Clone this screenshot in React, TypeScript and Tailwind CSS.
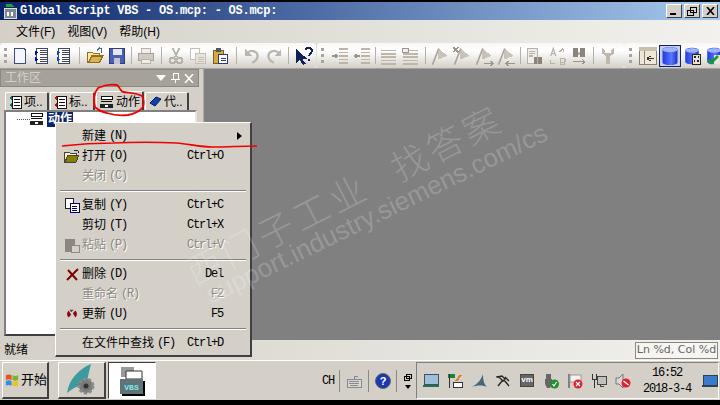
import React from 'react'

const raised = 'border border-t-white border-l-white border-r-[#404040] border-b-[#404040]'
const monoText = "font-['Liberation_Mono',monospace] text-[12px] tracking-[-1.2px]"

const Svg: React.FC<{ children: React.ReactNode; size?: number }> = ({ children, size = 16 }) => (
  <svg width={size} height={size} viewBox="0 0 16 16" fill="none" shapeRendering="crispEdges">
    {children}
  </svg>
)

const PageIcon = () => (
  <Svg size={18}>
    <path d="M3 1h8l2 2v12H3z" fill="#f4f6fc" stroke="#3a4a8a" />
  </Svg>
)
const ListIcon: React.FC<{ color?: string }> = ({ color = '#0000c0' }) => (
  <Svg size={18}>
    <path d="M3 1h10v14H3z" fill="#fff" stroke="#3a4a6a" />
    <path d="M6 3h6M6 5h6M6 7h6M6 9h6M6 11h6M6 13h6" stroke="#445" />
    <path d="M2 3l3 2-3 2zM2 9l3 2-3 2z" fill={color} />
  </Svg>
)
const OpenIcon = () => (
  <Svg size={18}>
    <path d="M1 5h5l1 1h5v2H5l-3 6H1z" fill="#ffe9a0" stroke="#8a7020" />
    <path d="M2 14l3-6h10l-3 6z" fill="#e0b050" stroke="#8a7020" />
    <path d="M10 3l2-2 2 1v3" stroke="#4060a0" />
  </Svg>
)
const SaveIcon = () => (
  <Svg size={18}>
    <path d="M1 1h14v14H1z" fill="#4a60b0" stroke="#303a80" />
    <path d="M4 2h8v5H4z" fill="#e8e8f0" />
    <path d="M5 10h6v5H5z" fill="#c0c4d8" />
  </Svg>
)
const PrintIcon = () => (
  <Svg size={18}>
    <path d="M4 1h8v5H4z" fill="#f0eeea" stroke="#b8b2a8" />
    <path d="M1 6h14v6H1z" fill="#d0ccc4" stroke="#a8a298" />
    <path d="M4 11h8v4H4z" fill="#f0eeea" stroke="#b8b2a8" />
  </Svg>
)
const CutIcon = () => (
  <Svg size={18}>
    <path d="M5 1l4 8M11 1L7 9" stroke="#b8b2a8" strokeWidth="1.5" />
    <circle cx="5" cy="12" r="2.5" stroke="#b8b2a8" strokeWidth="1.5" />
    <circle cx="11" cy="12" r="2.5" stroke="#b8b2a8" strokeWidth="1.5" />
  </Svg>
)
const CopyIcon: React.FC<{ dark?: boolean }> = ({ dark }) => (
  <Svg size={dark ? 16 : 18}>
    <path d="M1 1h8v10H1z" fill="#fff" stroke={dark ? '#222' : '#c4beb4'} />
    <path d="M6 6h9v9H6z" fill={dark ? '#fff' : '#e8e4dc'} stroke={dark ? '#00007a' : '#c4beb4'} />
    <path d="M8 9h5M8 11h5M8 13h5" stroke={dark ? '#00007a' : '#c4beb4'} />
  </Svg>
)
const PasteIcon = () => (
  <Svg size={18}>
    <path d="M2 3h9v12H2z" fill="#d8a840" stroke="#7a6020" />
    <path d="M4 1h5v3H4z" fill="#555" />
    <path d="M7 7h8v8H7z" fill="#fff" stroke="#2a3a7a" />
    <path d="M9 10h4M9 12h4" stroke="#2a3a7a" />
  </Svg>
)
const UndoIcon: React.FC<{ flip?: boolean }> = ({ flip }) => (
  <Svg size={18}>
    <g transform={flip ? 'matrix(-1 0 0 1 16 0)' : undefined}>
      <path d="M4 5c4-3 9-1 9 3s-3 5-5 6" stroke="#bcb6ac" strokeWidth="2" fill="none" shapeRendering="auto" />
      <path d="M2 2v6h6z" fill="#bcb6ac" />
    </g>
  </Svg>
)
const HelpArrowIcon = () => (
  <Svg size={20}>
    <path d="M2 2v12l3-3 3 4 2-1-3-4h4z" fill="#10205a" />
    <path d="M10 3c1-2 5-2 5 1 0 2-2 2-2 4M13 10v2" stroke="#10205a" strokeWidth="1.6" />
  </Svg>
)
const IndentIcon: React.FC<{ left?: boolean }> = ({ left }) => (
  <Svg size={18}>
    <path d="M7 2h8M7 5h8M7 8h8M7 11h8M7 14h8" stroke="#bcb4a8" strokeWidth="1.4" />
    <path d={left ? 'M1 8h5M1 8l2-2M1 8l2 2' : 'M1 8h5M6 8l-2-2M6 8l-2 2'} stroke="#9a958c" strokeWidth="1.3" />
  </Svg>
)
const LinesIcon: React.FC<{ back?: boolean }> = ({ back }) => (
  <Svg size={18}>
    <path d="M2 3h13M2 6h13M2 9h13M2 12h13M2 15h13" stroke="#bfb6a8" strokeWidth="1.5" />
    {back && <path d="M1 1h6v4H1z" fill="#f0eeea" stroke="#9a958c" />}
  </Svg>
)
const FlagIcon: React.FC<{ mark?: 'x' | 'r' | 'l' }> = ({ mark }) => (
  <Svg size={20}>
    <path d="M2 15L7 2" stroke="#a8a298" strokeWidth="1.3" shapeRendering="auto" />
    <path d="M7 2l7 6-8 3z" fill="#c8c2b8" />
    {mark === 'x' && <path d="M1 1l4 4M5 1L1 5" stroke="#9a958c" strokeWidth="1.4" />}
    {mark === 'r' && <path d="M8 14h7M13 12l2 2-2 2" stroke="#9a958c" />}
    {mark === 'l' && <path d="M8 14h7M10 12l-2 2 2 2" stroke="#9a958c" />}
  </Svg>
)
const FindIcon = () => (
  <Svg size={18}>
    <path d="M1 1h9v14H1z" fill="#f0eeea" stroke="#b8b2a8" />
    <path d="M3 4h5M3 6h5M3 8h3" stroke="#b8b2a8" />
    <path d="M7 9h3v6H7zM11 9h3v6h-3z" fill="#8c847c" />
  </Svg>
)
const ReplaceIcon = () => (
  <Svg size={20}>
    <path d="M3 8l2-6 2 6M4 6h2" stroke="#b8b2a8" shapeRendering="auto" />
    <path d="M10 5l3-3M13 2v3" stroke="#b8b2a8" />
    <path d="M3 11v3h3M11 10h2a1 1 0 010 3h-2zM11 13h2a1 1 0 010 2h-2z" stroke="#b8b2a8" />
  </Svg>
)
const BinocularIcon = () => (
  <Svg size={18}>
    <path d="M3 1h4v8H3zM9 1h4v8H9z" fill="#8c847c" />
    <path d="M7 4h2v3H7z" fill="#b8b2a8" />
    <path d="M3 13h10M11 11l2 2-2 2" stroke="#9a958c" />
  </Svg>
)
const WrenchIcon = () => (
  <Svg size={18}>
    <path d="M3 1v5l3 2v7h4V8l3-2V1l-2 2v2H5V3z" fill="#c0b8ac" />
  </Svg>
)
const WindowIcon = () => (
  <Svg size={20}>
    <path d="M1 1h14v14H1z" fill="#efe8d8" stroke="#8a7f68" />
    <path d="M1 1h14v3H1z" fill="#c8c0ac" />
    <path d="M5 4v11" stroke="#8a7f68" />
    <path d="M7 10h6M7 10l3-2M7 10l3 2" stroke="#333" />
  </Svg>
)
const DbIcon: React.FC<{ size?: number }> = ({ size = 22 }) => (
  <svg width={size} height={size} viewBox="0 0 16 16">
    <defs>
      <linearGradient id="db" x1="0" x2="1" y1="0" y2="0">
        <stop offset="0" stopColor="#2038e0" />
        <stop offset="0.6" stopColor="#5a78ff" />
        <stop offset="1" stopColor="#2030c0" />
      </linearGradient>
    </defs>
    <path d="M2 3c0-3 12-3 12 0v10c0 3-12 3-12 0z" fill="url(#db)" />
    <ellipse cx="8" cy="3" rx="6" ry="2" fill="#a0b4ff" />
  </svg>
)
const DbBitsIcon = () => (
  <span className="relative w-[19px] h-[18px]">
    <DbIcon size={18} />
    <svg className="absolute left-0 top-0" width="19" height="18" viewBox="0 0 19 18" fill="none" shapeRendering="crispEdges">
      <path d="M9.5 7.5h8v10h-8z" fill="#e8e4dc" stroke="#222" />
      <path d="M11 9h2v2h-2zM15 9h1v2h-1zM11 13h1v2h-1zM14 13h2v2h-2z" fill="#222" />
    </svg>
  </span>
)
const DbCheckIcon = () => (
  <span className="relative w-[19px] h-[18px]">
    <DbIcon size={18} />
    <svg className="absolute left-0 top-0" width="19" height="18" viewBox="0 0 19 18" fill="none">
      <path d="M9 8h9v9H9z" fill="#e8e4dc" />
      <path d="M3 13l3 3 7-7" stroke="#10a020" strokeWidth="2.5" />
    </svg>
  </span>
)

const Grip = () => (
  <span className="flex flex-col gap-[3px] w-[4px] items-center shrink-0">
    <span className="w-[3px] h-[3px] bg-[#a8a49a]" />
    <span className="w-[3px] h-[3px] bg-[#a8a49a]" />
    <span className="w-[3px] h-[3px] bg-[#a8a49a]" />
  </span>
)
const Sep = () => <span className="w-px h-[17px] bg-[#b4b0a8] mx-auto" />
const Btn: React.FC<{ children: React.ReactNode; w?: string }> = ({ children, w = 'w-[22px]' }) => (
  <span className={`${w} h-[22px] flex items-center justify-center shrink-0`}>{children}</span>
)
const SepSlot: React.FC<{ w: string }> = ({ w }) => (
  <span className={`${w} flex items-center shrink-0`}>
    <Sep />
  </span>
)

const Toolbar = () => (
  <div className="h-[25px] flex bg-[linear-gradient(to_right,#d4d0c8,#f2f1ed)] shrink-0">
    <div className="w-[316px] flex items-center pl-[3px] rounded-[3px] bg-[linear-gradient(to_bottom,#f8f7f5,#ffffff_30%,#d4d0c8)] shrink-0">
      <span className="w-[6px] flex"><Grip /></span>
      <Btn><PageIcon /></Btn>
      <Btn><ListIcon /></Btn>
      <Btn><ListIcon color="#2040c0" /></Btn>
      <SepSlot w="w-[9px]" />
      <Btn><OpenIcon /></Btn>
      <Btn><SaveIcon /></Btn>
      <SepSlot w="w-[7px]" />
      <Btn><PrintIcon /></Btn>
      <SepSlot w="w-[8px]" />
      <Btn><CutIcon /></Btn>
      <Btn><CopyIcon /></Btn>
      <Btn><PasteIcon /></Btn>
      <SepSlot w="w-[10px]" />
      <Btn><UndoIcon /></Btn>
      <Btn><UndoIcon flip /></Btn>
      <SepSlot w="w-[7px]" />
      <Btn><HelpArrowIcon /></Btn>
    </div>
    <div className="w-[307px] ml-px flex items-center pl-[3px] rounded-[3px] bg-[linear-gradient(to_bottom,#f8f7f5,#ffffff_30%,#d4d0c8)] shrink-0">
      <span className="w-[9px] flex"><Grip /></span>
      <Btn><IndentIcon /></Btn>
      <Btn><IndentIcon left /></Btn>
      <SepSlot w="w-[4px]" />
      <Btn><LinesIcon /></Btn>
      <Btn><LinesIcon back /></Btn>
      <SepSlot w="w-[8px]" />
      <Btn><FlagIcon /></Btn>
      <Btn><FlagIcon mark="x" /></Btn>
      <Btn><FlagIcon mark="r" /></Btn>
      <Btn><FlagIcon mark="l" /></Btn>
      <SepSlot w="w-[7px]" />
      <Btn><FindIcon /></Btn>
      <Btn><ReplaceIcon /></Btn>
      <Btn><BinocularIcon /></Btn>
      <SepSlot w="w-[7px]" />
      <Btn><WrenchIcon /></Btn>
    </div>
    <div className="flex-1 flex items-center pl-[4px] rounded-l-[3px] bg-[linear-gradient(to_bottom,#f8f7f5,#ffffff_30%,#d4d0c8)]">
      <span className="w-[9px] flex"><Grip /></span>
      <Btn><WindowIcon /></Btn>
      <span className="w-[22px] h-[22px] flex items-center justify-center bg-[#c6cfe6] border border-[#0a246a] shrink-0"><DbIcon /></span>
      <Btn><DbBitsIcon /></Btn>
      <Btn><DbCheckIcon /></Btn>
    </div>
  </div>
)

const ActionIcon = () => (
  <svg width="14" height="14" viewBox="0 0 14 14" fill="none" shapeRendering="crispEdges">
    <path d="M1 1h11v3H1zM1 6h11M1 9h11" stroke="#111" fill="#fff" />
    <path d="M0 9h13v4H0z" fill="#222" />
    <path d="M5 10l3 2M8 10l-3 2" stroke="#fff" />
  </svg>
)
const TabIcon: React.FC<{ color: string }> = ({ color }) => (
  <svg width="13" height="14" viewBox="0 0 13 14" fill="none" shapeRendering="crispEdges">
    <path d="M3 1h9v12H3z" fill="#fff" stroke="#111" />
    <path d="M5 4h6M5 7h6M5 10h6" stroke="#111" />
    <path d="M0 3l3-2v4zM0 10l3-2v4z" fill={color} />
  </svg>
)
const CodeIcon = () => (
  <svg width="13" height="12" viewBox="0 0 13 12" fill="none">
    <path d="M1 7l6-6 5 2-6 7z" fill="#1040b0" stroke="#0a1a50" />
  </svg>
)

const Tab: React.FC<{ icon: React.ReactNode; label: string; w: string; active?: boolean }> = ({ icon, label, w, active }) => (
  <div className={`${w} ${active ? 'h-[20px] -mb-px' : 'h-[18px]'} flex items-center gap-[2px] pl-[3px] text-[12px] leading-none text-black bg-[#d4d0c8] border-t border-l border-t-white border-l-white border-r-2 border-r-[#404040] rounded-t-[2px] overflow-hidden whitespace-nowrap`}>
    {icon}
    <span>{label}</span>
  </div>
)

const Panel = () => (
  <div className="w-[204px] shrink-0 flex flex-col bg-[#d4d0c8] border-r border-r-[#b0aca4]">
    <div className="h-[18px] mr-[4px] flex items-center justify-between pl-[4px] pr-[4px] bg-[#a6a29a] border border-[#8c8880] text-[#d4d0c8] text-[12px] shrink-0">
      <span>工作区</span>
      <span className="flex items-center gap-[4px]">
        <svg width="10" height="6" viewBox="0 0 10 6"><path d="M0 0h10L5 6z" fill="#fff" /></svg>
        <svg width="10" height="10" viewBox="0 0 10 10" fill="none" shapeRendering="crispEdges"><path d="M3 0h5v6H3zM1 6h9M5 6v4" stroke="#fff" /></svg>
        <svg width="10" height="9" viewBox="0 0 10 9" fill="none"><path d="M1 0l8 9M9 0L1 9" stroke="#fff" strokeWidth="1.5" /></svg>
      </span>
    </div>
    <div className="h-[23px] flex items-end gap-px pl-[5px] shrink-0">
      <Tab icon={<TabIcon color="#007a60" />} label="项.." w="w-[44px]" />
      <Tab icon={<TabIcon color="#d00000" />} label="标.." w="w-[45px]" />
      <Tab icon={<ActionIcon />} label="动作" w="w-[48px]" active />
      <Tab icon={<CodeIcon />} label="代.." w="w-[44px]" />
    </div>
    <div className="flex-1 ml-[4px] mr-[6px] mb-[4px] bg-white border-2 border-t-[#808080] border-l-[#808080] border-r-[#e8e6e0] border-b-[#404040] flex items-start">
      <span className="w-[13px] ml-[11px] mt-[7px] border-t border-dotted border-t-[#555]" />
      <ActionIcon />
      <span className="ml-[3px] px-[1px] bg-[#0a246a] text-white text-[12px] font-bold leading-[15px]">动作</span>
    </div>
  </div>
)

const FolderSmall = () => (
  <svg width="17" height="14" viewBox="0 0 17 14" fill="none" shapeRendering="crispEdges">
    <path d="M1 3h5l1 1h6v2H5l-3 6H1z" fill="#fff8c0" stroke="#444" />
    <path d="M2 13l3-7h11l-3 7z" fill="#858000" stroke="#444" />
    <path d="M11 2l2-1 2 1v2" stroke="#222" />
  </svg>
)
const PasteGrey = () => (
  <svg width="16" height="16" viewBox="0 0 16 16" fill="none" shapeRendering="crispEdges">
    <path d="M1 2h10v13H1z" fill="#8c8880" />
    <path d="M7 8h8v7H7z" fill="#d4d0c8" stroke="#8c8880" />
  </svg>
)
const DeleteRed = () => (
  <svg width="14" height="13" viewBox="0 0 14 13" fill="none">
    <path d="M2 12L13 1M3 2l9 10" stroke="#800000" strokeWidth="2" />
  </svg>
)
const RefreshRed = () => (
  <svg width="12" height="14" viewBox="0 0 14 14" fill="none">
    <path d="M3 3a6 6 0 000 8l3-3z" fill="#900010" />
    <path d="M11 11a6 6 0 000-8L8 6z" fill="#900010" />
    <path d="M4 2h5l-3 3z" fill="#444" />
  </svg>
)

type Row = { label?: string; key?: string; shortcut?: string; icon?: React.ReactNode; disabled?: boolean; arrow?: boolean }

const menuRows: Row[] = [
  { label: '新建', key: '(N)', arrow: true },
  { label: '打开', key: '(O)', shortcut: 'Ctrl+O', icon: <FolderSmall /> },
  { label: '关闭', key: '(C)', disabled: true },
  {},
  { label: '复制', key: '(Y)', shortcut: 'Ctrl+C', icon: <CopyIcon dark /> },
  { label: '剪切', key: '(T)', shortcut: 'Ctrl+X' },
  { label: '粘贴', key: '(P)', shortcut: 'Ctrl+V', icon: <PasteGrey />, disabled: true },
  {},
  { label: '删除', key: '(D)', shortcut: 'Del', icon: <DeleteRed /> },
  { label: '重命名', key: '(R)', shortcut: 'F2', disabled: true },
  { label: '更新', key: '(U)', shortcut: 'F5', icon: <RefreshRed /> },
  {},
  { label: '在文件中查找', key: '(F)', shortcut: 'Ctrl+D' },
]

const ContextMenu = () => (
  <div className="absolute left-[55px] top-[122px] w-[197px] pt-[3px] pb-[2px] px-[2px] bg-[#d4d0c8] border border-t-white border-l-white border-r-[#404040] border-b-[#404040] border-r-2 border-b-2">
    {menuRows.map((r, i) =>
      r.label ? (
        <div key={i} className={`h-[20px] flex items-center text-[12px] ${r.disabled ? 'text-[#8c8880] [text-shadow:1px_1px_0_#fff]' : 'text-black'}`}>
          <span className="w-[24px] pl-[3px] flex justify-center shrink-0">{r.icon}</span>
          <span className="whitespace-nowrap">{r.label}</span>
          <span className={`${monoText} ml-[3px]`}>{r.key}</span>
          <span className={`${monoText} ml-auto mr-[25px]`}>{r.shortcut}</span>
          {r.arrow && (
            <svg className="absolute right-[8px]" width="5" height="8" viewBox="0 0 5 8"><path d="M0 0l5 4-5 4z" fill="#000" /></svg>
          )}
        </div>
      ) : (
        <div key={i} className="h-[9px] flex items-center">
          <div className="h-[2px] w-full mx-[2px] border-t border-t-[#808080] border-b border-b-white" />
        </div>
      )
    )}
  </div>
)

const Watermark = () => (
  <div className="absolute left-0 top-0 w-[720px] h-[405px] overflow-hidden pointer-events-none text-white/20">
    <div className="absolute left-[207px] top-[283px] whitespace-nowrap origin-left -rotate-[26deg] font-['Liberation_Sans',sans-serif] text-[26px] leading-none">
      support.industry.siemens.com/cs
    </div>
    <div className="absolute left-[189px] top-[258px] flex gap-[30px] whitespace-nowrap origin-left -rotate-[27deg] text-[36px] tracking-[4px] font-light leading-none">
      <span>西门子工业</span>
      <span>找答案</span>
    </div>
  </div>
)

const RedInk = () => (
  <svg className="absolute left-0 top-0 pointer-events-none" width="720" height="405" viewBox="0 0 720 405" fill="none">
    <path d="M95 107c-2-7-1-14 3-19 6-3 13-4 19-3 3 2 3 6 6 7 6 1 14 1 19 4 2 4 2 8 1 11-4 5-9 7-15 8-7 1-15 0-21-2-5-1-9-3-12-6z" stroke="#f00000" strokeWidth="1.8" />
    <path d="M62 146c17-2 34-3 51-3 21-1 43-1 64 0 12 1 24 4 36 4 15 0 29-1 44-1" stroke="#f00000" strokeWidth="1.6" />
  </svg>
)

const SysBtn: React.FC<{ children: React.ReactNode }> = ({ children }) => (
  <span className={`w-[16px] h-[14px] bg-[#d4d0c8] ${raised} flex items-center justify-center`}>{children}</span>
)

const Tray = () => (
  <svg width="16" height="14" viewBox="0 0 16 14" fill="none" shapeRendering="crispEdges">
    <path d="M1 1h14v10H1z" fill="#3a7ad0" stroke="#304050" />
    <path d="M0 11h16v2H0z" fill="#304050" />
  </svg>
)

const trayIcons: React.ReactNode[] = [
  <svg key="a" width="16" height="16" viewBox="0 0 16 16" fill="none" shapeRendering="crispEdges"><path d="M1 1h14v10H1z" fill="#9cc0dc" stroke="#405060" /><path d="M0 12h16v2H0z" fill="#207050" /></svg>,
  <svg key="b" width="16" height="16" viewBox="0 0 16 16" fill="none" shapeRendering="crispEdges"><path d="M1 1h7v4H1z" fill="#208040" /><path d="M2 1v14" stroke="#333" /><path d="M6 9h9v5H6z" fill="#fff" stroke="#333" /><path d="M9 8l5-6" stroke="#e08020" strokeWidth="2" /></svg>,
  <svg key="c" width="16" height="16" viewBox="0 0 16 16" fill="none"><path d="M0 14C6 12 10 7 12 1c0 6 1 10 4 13-4-2-9-2-16 0z" fill="#4a6478" /></svg>,
  <svg key="d" width="14" height="14" viewBox="0 0 14 14" fill="none"><path d="M1 3l5-1 3 3-2 2-3-3zM6 7l-4 5M8 6l5 6M9 3l4 4" stroke="#222" strokeWidth="1.3" /></svg>,
  <span key="e" className="w-[14px] h-[13px] bg-[#666] border border-[#444] text-white text-[8px] leading-[10px] text-center font-['Liberation_Sans'] font-bold">vm</span>,
  <svg key="f" width="16" height="16" viewBox="0 0 16 16" fill="none"><path d="M3 1h5v5h1v5l-2 4H4l-2-4V6h1z" fill="#666" /><circle cx="11.5" cy="11" r="4.5" fill="#209030" /><path d="M9.5 11l1.5 2 2.5-4" stroke="#fff" strokeWidth="1.2" /></svg>,
  <svg key="g" width="16" height="16" viewBox="0 0 16 16" fill="none"><path d="M2 1v14" stroke="#555" strokeWidth="1.3" /><path d="M3 2h11v7H3z" fill="#f4f2ee" stroke="#999" /><circle cx="11" cy="11" r="4.5" fill="#e02030" /><path d="M9 9l4 4M13 9l-4 4" stroke="#fff" strokeWidth="1.2" /></svg>,
  <svg key="h" width="16" height="16" viewBox="0 0 16 16" fill="none" shapeRendering="crispEdges"><path d="M1 1v5h4V1M3 6v9" stroke="#333" /><path d="M6 3h9v8H6z" fill="#c0c0c0" stroke="#444" /><path d="M9 11v2h4" stroke="#444" /></svg>,
  <svg key="i" width="16" height="16" viewBox="0 0 16 16" fill="none"><path d="M1 5h3l4-4v14l-4-4H1z" fill="#d8d8d8" stroke="#777" /><circle cx="11" cy="10" r="4.5" fill="#e02030" /><path d="M8.5 8l5 4" stroke="#fff" strokeWidth="1.4" /></svg>,
]

const Taskbar = () => (
  <div className="h-[40px] flex items-center bg-[#d4d0c8] border-t border-t-white pl-[2px] shrink-0">
    <div className={`w-[47px] h-[37px] flex items-center gap-[1px] pl-[2px] ${raised} border-r-2 border-b-2 text-[12px] text-black whitespace-nowrap`}>
      <svg width="16" height="16" viewBox="0 0 16 16">
        <path d="M1 3c2-1 4-1 6 0v5c-2-1-4-1-6 0z" fill="#e8502a" />
        <path d="M8 3c2 1 4 1 6 0v5c-2 1-4 1-6 0z" fill="#78b828" />
        <path d="M1 9c2-1 4-1 6 0v5c-2-1-4-1-6 0z" fill="#3090e0" />
        <path d="M8 9c2 1 4 1 6 0v5c-2 1-4 1-6 0z" fill="#f4c020" />
      </svg>
      <span className="text-[13px]">开始</span>
    </div>
    <div className={`ml-[9px] w-[48px] h-[37px] flex items-center justify-center ${raised} border-r-2 border-b-2`}>
      <svg width="34" height="34" viewBox="0 0 34 34" fill="none">
        <path d="M2 30C4 16 14 6 26 1c-2 8-4 15-4 20-8 1-14 4-20 9z" fill="#3a9aa0" />
        <circle cx="21" cy="23" r="7" fill="#7a7a7a" stroke="#8a8a8a" strokeWidth="3" strokeDasharray="3 2" />
        <circle cx="21" cy="23" r="2.5" fill="#333" />
      </svg>
    </div>
    <div className="ml-[2px] w-[48px] h-[37px] flex items-center justify-center bg-white border border-t-[#404040] border-l-[#404040] border-r-white border-b-white">
      <svg width="28" height="32" viewBox="0 0 28 32" fill="none">
        <path d="M3 2h13v5H8v5H3z" fill="#999" />
        <path d="M8 6h16v8H8z" fill="#fff" stroke="#333" />
        <path d="M2 14h23v15H2z" fill="#607478" />
        <path d="M25 16h2v15H4v-2h21z" fill="#000" />
        <text x="13.5" y="25" textAnchor="middle" fill="#80e8f0" fontSize="8" fontWeight="700" fontFamily="Liberation Mono">VBS</text>
      </svg>
    </div>
    <div className="flex-1" />
    <span className={`${monoText} text-black mr-[5px]`}>CH</span>
    <span className="w-px h-[22px] bg-[#8c8880] mr-[6px]" />
    <svg width="16" height="14" viewBox="0 0 16 14" fill="none" shapeRendering="crispEdges">
      <path d="M1 5h14v8H1z" fill="#d8d8d8" stroke="#888" />
      <path d="M3 7h10M3 9h10M4 11h8" stroke="#888" />
      <path d="M8 5V2h4" stroke="#888" />
    </svg>
    <span className="w-px h-[22px] bg-[#8c8880] ml-[6px] mr-[6px]" />
    <svg width="16" height="16" viewBox="0 0 16 16">
      <circle cx="8" cy="8" r="7.5" fill="#1a38b0" stroke="#666" />
      <text x="8" y="12" textAnchor="middle" fill="#fff" fontSize="11" fontWeight="700" fontFamily="Liberation Sans">?</text>
    </svg>
    <span className="w-px h-[22px] bg-[#8c8880] ml-[5px] mr-[6px]" />
    <span className="flex flex-col items-center gap-[4px] mr-[4px]">
      <svg width="9" height="8" viewBox="0 0 9 8" fill="none" shapeRendering="crispEdges"><path d="M3 1h5v4H3zM1 3h5v4H1z" fill="#d4d0c8" stroke="#000" /></svg>
      <svg width="6" height="4" viewBox="0 0 6 4"><path d="M0 0h6L3 4z" fill="#000" /></svg>
    </span>
    <div className="w-[303px] h-[37px] mr-[1px] flex items-center pl-[6px] border border-t-[#808080] border-l-[#808080] border-r-white border-b-white">
      <span className="flex items-center gap-[8px]">
        {trayIcons.map((ic, i) => (
          <span key={i} className="w-[16px] flex justify-center">{ic}</span>
        ))}
      </span>
      <span className={`${monoText} w-[63px] ml-[7px] flex flex-col items-center leading-[16px] text-black`}>
        <span>16:52</span>
        <span>2018-3-4</span>
      </span>
      <span className="ml-[6px]"><Tray /></span>
    </div>
  </div>
)

export default function App() {
  return (
    <div className="relative w-[720px] h-[405px] overflow-hidden bg-black flex flex-col font-['Liberation_Sans','Noto_Sans_CJK_SC',sans-serif] text-[12px]">
      <div className="h-[2px] shrink-0" />
      <div className="h-[18px] flex items-center pl-[3px] pr-[2px] bg-[linear-gradient(to_right,#0a246a,#a6caf0)] shrink-0">
        <svg width="15" height="16" viewBox="0 0 15 16" fill="none" shapeRendering="crispEdges">
          <path d="M3 1h6l2 3H3z" fill="#20a040" />
          <path d="M1 5h12v10H1z" fill="#808890" stroke="#ddd" />
          <path d="M4 9h2v4H4zM8 9h2v4H8z" fill="#fff" />
        </svg>
        <span className="ml-[2px] font-['Liberation_Mono',monospace] text-[12px] font-bold text-white whitespace-pre tracking-[-0.25px]">Global Script VBS - OS.mcp: - OS.mcp:</span>
        <span className="ml-auto flex">
          <SysBtn><span className="w-[6px] h-[2px] bg-black mt-[6px] -ml-[2px]" /></SysBtn>
          <span className="ml-[2px]" />
          <SysBtn>
            <svg width="10" height="9" viewBox="0 0 10 9" fill="none" shapeRendering="crispEdges"><path d="M3 0.5h6v5H3zM0.5 3h6v5.5h-6z" fill="#d4d0c8" stroke="#000" /></svg>
          </SysBtn>
          <span className="ml-[2px]" />
          <SysBtn>
            <svg width="9" height="8" viewBox="0 0 9 8" fill="none"><path d="M1 0l7 8M8 0L1 8" stroke="#000" strokeWidth="1.6" /></svg>
          </SysBtn>
        </span>
      </div>
      <div className="h-[23px] flex items-center gap-[12px] pl-[16px] bg-[linear-gradient(to_right,#d4d0c8,#f2f1ed)] text-[12px] text-black shrink-0">
        <span>文件(F)</span>
        <span>视图(V)</span>
        <span>帮助(H)</span>
      </div>
      <Toolbar />
      <div className="flex-1 flex min-h-0 bg-[#808080] border-t border-t-[#a6a29a]">
        <Panel />
        <div className="flex-1" />
      </div>
      <div className="h-[20px] flex items-center justify-between pl-[4px] pr-[2px] bg-[linear-gradient(to_right,#d4d0c8,#f2f1ed)] text-black shrink-0">
        <span>就绪</span>
        <span className="w-[83px] h-[17px] flex items-center justify-center bg-[#f6f5f2] border border-[#8c8880] text-[#666] text-[11px] font-['DejaVu_Sans',sans-serif] whitespace-nowrap">Ln %d, Col %d</span>
      </div>
      <Taskbar />
      <div className="h-[5px] shrink-0" />
      <ContextMenu />
      <Watermark />
      <RedInk />
    </div>
  )
}
